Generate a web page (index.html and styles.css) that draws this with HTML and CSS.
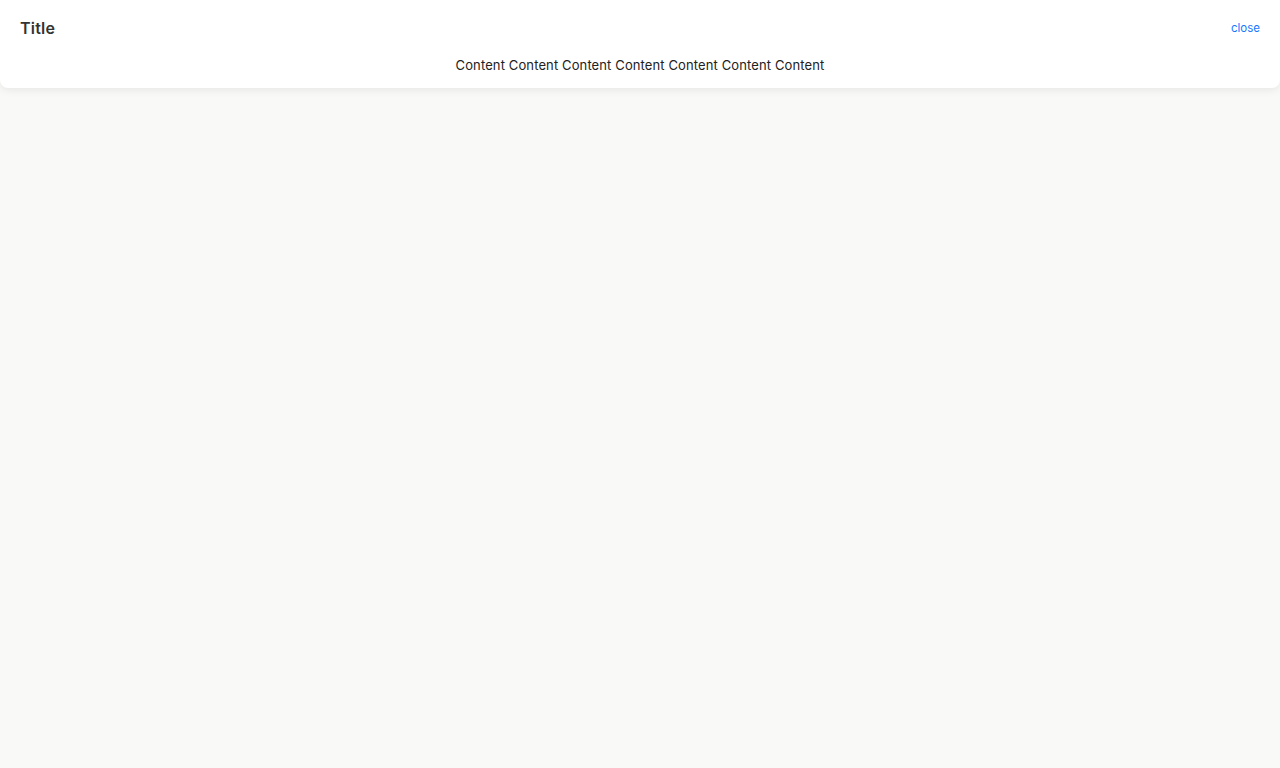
FILE: index.html
```html
<!DOCTYPE html>
<html>
<head>
<meta charset="utf-8">
<link rel="stylesheet" href="styles.css">
</head>
<body>
<div class="card">
  <div class="header">
    <div class="title">Title</div>
    <a class="close">close</a>
  </div>
  <div class="content">Content Content Content Content Content Content Content</div>
</div>
</body>
</html>
```
FILE: styles.css
```css
html, body {
  margin: 0;
  padding: 0;
  background: #f9f9f7;
  height: 100%;
}
body {
  font-family: Inter, "Noto Sans", sans-serif;
}
.card {
  background: #fff;
  border-radius: 0 0 8px 8px;
  box-shadow: 0 2px 8px rgba(0,0,0,0.08);
  height: 88px;
  box-sizing: border-box;
  padding: 0 20px;
}
.header {
  display: flex;
  justify-content: space-between;
  align-items: center;
  height: 56px;
}
.title {
  font-size: 16px;
  font-weight: 600;
  color: #333;
  letter-spacing: 0.2px;
}
.close {
  font-size: 11.5px;
  color: #1677ff;
  cursor: pointer;
}
.content {
  text-align: center;
  font-size: 13px;
  letter-spacing: 0.12px;
  color: #222;
  line-height: 18px;
}
```
